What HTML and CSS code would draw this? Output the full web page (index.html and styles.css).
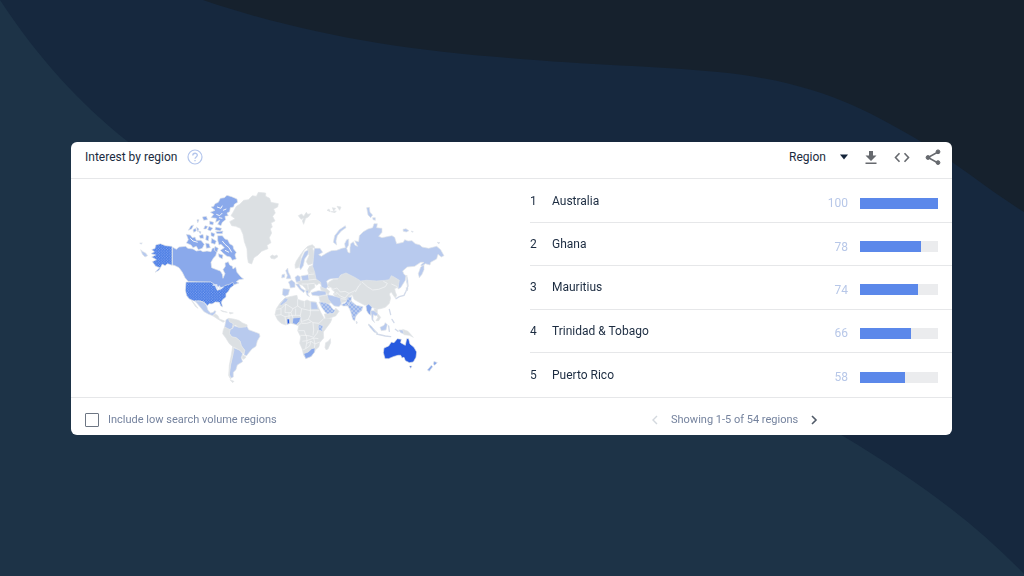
FILE: index.html
```html
<!DOCTYPE html>
<html lang="en">
<head>
<meta charset="utf-8">
<meta name="viewport" content="width=device-width, initial-scale=1">
<title>Interest by region</title>
<link rel="stylesheet" href="styles.css">
</head>
<body>
<svg class="backdrop" viewBox="0 0 1024 576" preserveAspectRatio="none" aria-hidden="true">
  <path class="backdrop-dark" d="M203 0C300 33 400 50 509 58C590 65 655 66 718 72C820 82 870 112 920 141C958 164 990 191 1024 212V0Z"/>
  <path class="backdrop-teal" d="M0 0C36 55 79 103 127 141C350 300 620 300 843 436C915 479 974 522 1024 574V576H0Z"/>
</svg>
<main class="page">
  <section class="card" aria-labelledby="card-title">
    <header class="card-header">
      <h1 class="title" id="card-title">Interest by region</h1>
      <button class="icon-button help" type="button" aria-label="Help">
        <svg width="16" height="16" viewBox="0 0 16 16" fill="none" stroke="currentColor"><circle cx="8" cy="8" r="7" stroke-width="1.2"/><path d="M5.8 6.4C5.8 3.5 10.3 3.6 10.3 6.2C10.3 7.9 8 7.9 8 9.8M8 11V12.3" stroke-width="1.3"/></svg>
      </button>
      <div class="actions">
        <label class="region-picker">
          <select class="region-select" aria-label="Resolution"><option>Region</option></select>
          <svg class="caret" width="8" height="6" viewBox="0 0 8 6"><path d="M0 .5H8L4 5.5Z" fill="currentColor"/></svg>
        </label>
        <button class="icon-button" type="button" aria-label="Download">
          <svg width="16" height="16" viewBox="0 0 16 16" fill="currentColor"><path d="M6 2H10V6.5H13.5L8 12L2.5 6.5H6ZM2.5 13.5H13.5V15.1H2.5Z"/></svg>
        </button>
        <button class="icon-button" type="button" aria-label="Embed">
          <svg width="16" height="16" viewBox="0 0 16 16" fill="none" stroke="currentColor" stroke-width="1.6"><path d="M5.5 4.2L1.5 8.5L5.5 12.8M10.5 4.2L14.5 8.5L10.5 12.8"/></svg>
        </button>
        <button class="icon-button" type="button" aria-label="Share">
          <svg width="16" height="16" viewBox="0 0 16 16" fill="currentColor" stroke="currentColor"><path d="M13 3L3 8.5L13 14" fill="none" stroke-width="1.5"/><circle cx="13" cy="2.8" r="1.9"/><circle cx="3" cy="8.5" r="1.9"/><circle cx="13" cy="13.6" r="1.9"/></svg>
        </button>
      </div>
    </header>
    <div class="card-body">
      <svg class="map" viewBox="71 179 459 218" role="img" aria-label="World map of interest by region">
        <defs>
          <pattern id="dots-strong" width="8" height="8" patternUnits="userSpaceOnUse"><rect width="8" height="8" fill="#4478e4"/><circle cx="2" cy="2" r="1.7" fill="#94b2f2"/><circle cx="6" cy="6" r="1.7" fill="#94b2f2"/></pattern>
          <pattern id="dots-soft" width="12" height="12" patternUnits="userSpaceOnUse"><rect width="12" height="12" fill="#b8caee"/><circle cx="3" cy="3" r="2.2" fill="#6f98ea"/><circle cx="9" cy="9" r="2.2" fill="#6f98ea"/></pattern>
        </defs>

        <!-- Asia, Africa and Oceania without data -->
        <g class="land none" transform="translate(265 270) scale(.3333)">
          <path d="M186 48L192 36L206 28L218 28L232 10L250 2L262 8L280 16L296 20L296 76L262 74L252 80L244 94L228 100L226 84L212 80L204 72L210 66L202 60L198 52L190 54Z"/>
          <path d="M128 0L134 -10L150 -14L154 10L168 24L176 34L170 44L162 40L156 46L148 40L150 52L138 60L132 70L124 64L122 56L112 46L102 42L96 38L106 32L130 30L132 16Z"/>
          <path d="M166 50L182 54L194 64L190 74L182 68L168 60Z"/>
          <path d="M162 80L182 76L190 78L198 98L190 102L180 98L166 96Z"/>
          <path d="M178 132L206 130L212 114L222 124L212 138L190 146L182 148Z"/>
          <path d="M60 84L74 80L96 76L98 88L110 92L118 94L126 90L138 95L152 96L160 112L168 128L178 146L201 146L196 158L184 174L175 186L176 204L164 218L162 230L151 240L140 258L124 265L116 256L112 238L104 220L107 200L98 182L101 168L88 162L76 160L62 165L48 160L38 150L30 134L34 116L46 98Z"/>
          <path d="M182 218L190 214L196 206L197 218L189 237L183 239L180 232Z"/>
        </g>
        <g class="borders" transform="translate(265 270) scale(.3333)">
          <path d="M34 118L48 116L62 102L84 116L98 108L98 88M48 116L48 134L32 136M62 102L60 128L78 128L84 116M48 134L60 140L64 164M60 140L84 136L106 136L110 116L98 108M110 116L136 122L136 94M78 128L84 144M106 136L110 158L100 168M136 118V134L130 148L112 154M136 122L162 122M130 148L144 158L162 160L176 146M110 160H126L138 156M100 182L118 182L122 196L134 198L146 202L156 190L160 180M144 158L146 180L144 196M106 196L124 196L126 212L112 214M126 212L122 236L114 240M126 212L146 204L160 206M126 220L138 214L150 222L148 234M146 204L150 222L164 216M138 214L134 228L122 236M72 128V148M92 116V136M118 94V112"/>
          <path d="M188 48L204 58L216 54L226 66L240 64L252 70L270 62L290 54M214 66L226 78L240 84L252 70M228 86L244 88M204 72L216 72M130 14L148 12M132 30L150 28L166 26M110 42L128 42L130 58M128 42L148 40"/>
        </g>
        <g class="land none" transform="translate(350 270) scale(.3333)">
          <path d="M6 72L18 60L26 48L34 30L60 24L96 22L112 10L124 4L150 30L146 50L134 56L136 66L140 76L136 84L130 76L124 66L118 72L122 84L118 100L106 112L92 116L80 118L66 112L58 104L44 106L26 96L12 88Z"/>
          <path d="M72 116L82 118L82 130L92 142L86 152L78 152L84 142L74 126Z"/>
          <path d="M158 178L174 184L190 202L178 196L162 194Z"/>
        </g>
        <path class="borders" transform="translate(350 270) scale(.3333)" d="M36 36L52 50L68 60L86 58L106 50L112 40L100 34M124 42L142 50M34 40L26 48L16 66"/>
        <g class="islands" transform="translate(350 270) scale(.3333)">
          <path d="M138 86L148 80L162 76L168 64L174 48L172 34M118 118L122 134M126 148L132 158M80 192L106 198L122 200M116 168L118 184M136 178L144 184M56 164L70 178L82 190"/>
        </g>

        <!-- Greenland and northern islands -->
        <g class="land none" transform="translate(225 185) scale(.3333)">
          <path d="M14 110L30 101L18 92L24 82L34 64L44 58L56 46L70 44L82 32L94 34L100 22L122 24L122 34L134 40L138 52L160 56L158 66L146 72L151 84L143 94L150 108L138 114L142 126L136 132L140 144L133 158L138 173L126 181L129 191L110 199L98 211L87 218L80 237L70 233L67 215L66 192L58 170L54 148L46 130L32 124L20 122Z"/>
          <path d="M136 214L142 210L148 213L156 210L158 216L148 222L138 220Z"/>
          <path d="M220 92L230 87L236 94L244 82L248 88L257 86L250 96L242 100L236 118L232 108L236 100L228 103Z"/>
          <path d="M306 76L312 72L316 80ZM322 68L332 70L326 78ZM336 64L348 66L344 76ZM318 80L334 78L330 83Z"/>
          <path d="M210 239L214 228L226 210L236 196L248 184L262 179L270 187L258 192L244 190L236 198L228 216L226 236L220 248L211 250Z"/>
          <path d="M248 192L260 186L266 198L268 222L262 236L250 240L244 230L252 212Z"/>
          <path d="M254 244L268 240L270 262L258 264L250 254Z"/>
        </g>

        <!-- Russia -->
        <g class="land low" transform="translate(330 185) scale(.3333)">
          <path d="M-47 190L-30 190L-22 202L-34 209L-26 214L-10 204L4 197L20 196L36 190L46 188L44 176L50 164L56 162L56 180L50 190L54 202L60 204L60 188L62 176L70 170L75 181L83 184L74 167L86 170L88 152L100 140L114 132L128 128L132 116L142 116L140 128L156 130L156 142L146 154L156 158L176 154L186 152L194 157L200 176L220 172L224 164L234 168L246 167L256 176L270 180L276 186L296 190L320 184L332 194L342 212L334 216L324 208L320 222L302 232L300 240L286 236L276 244L272 240L282 232L272 232L254 244L232 246L218 258L222 268L228 272L226 286L212 308L204 312L206 296L208 286L192 276L184 272L178 284L166 286L140 288L110 286L92 288L76 278L60 270L48 264L32 270L26 280L0 282L-10 288L-6 304L-12 312L-26 306L-28 292L-42 282L-46 262L-52 244L-50 222Z"/>
          <path d="M272 246L282 240L282 254L276 268L268 278L265 266Z"/>
          <path d="M10 172L14 152L28 134L46 122L48 128L34 138L22 152L18 168L20 180Z"/>
          <path d="M110 68L118 67L120 82L128 90L122 98L114 90ZM128 98L136 98L136 106L129 104Z"/>
          <path d="M219 133L228 131L237 137L229 141L220 139ZM244 138L250 140L246 142ZM322 172L330 173L325 176Z"/>
          <path d="M230 270L234 288L232 304L230 290ZM228 308L234 310L232 318Z"/>
        </g>

        <!-- Europe, Middle East and South Asia -->
        <g class="land low" transform="translate(265 270) scale(.3333)">
          <path d="M62 2L68 -6L70 6L76 18L78 26L64 26L67 16Z"/><path d="M51 14L59 12L59 22L50 24Z"/>
          <path d="M70 36L80 30L90 38L90 52L76 54L74 44Z"/><path d="M54 56L74 58L70 74L60 79L52 74Z"/>
          <path d="M90 22L98 16L106 20L106 34L94 37Z"/><path d="M108 18L130 14L132 30L112 32Z"/>
          <path d="M92 42L102 42L108 54L120 62L116 68L104 58Z"/><path d="M138 68L160 62L182 64L184 74L162 78L142 76Z"/>
          <path d="M186 74L198 76L214 80L226 84L229 102L222 110L208 108L198 98L190 88Z"/>
          <path d="M60 84L70 86L66 94L50 106L44 104Z"/><path d="M137 95L154 97L160 118H138Z"/>
          <path d="M109 -33L119 -55L131 -61L129 -47L119 -33L115 -13L107 -1L103 -9Z"/>
          <path d="M122 62L132 60L128 72L134 80L126 76Z"/>
        </g>
        <g class="land" transform="translate(265 270) scale(.3333)" fill="url(#dots-soft)">
          <path d="M162 96L178 97L194 104L204 118L211 120L206 130L186 132L180 126L170 112Z"/>
          <path d="M228 104L242 98L248 82L260 80L258 94L248 108L234 108Z"/>
          <path d="M248 108L258 92L264 98L274 106L294 110L290 122L280 130L272 140L269 153L263 148L258 128L254 118Z"/>
          <path d="M160 164L174 166L172 184L160 180Z"/>
        </g>
        <g class="land mid" transform="translate(265 270) scale(.3333)">
          <path d="M84 144L107 142L104 154L94 164L82 160Z"/>
          <path d="M116 251L130 246L140 236L150 234L149 246L138 260L122 266Z"/>
        </g>
        <g class="land high" transform="translate(265 270) scale(.3333)"><path d="M66 147L73 147L74 160L67 163Z"/></g>
        <g class="land low" transform="translate(350 270) scale(.3333)">
          <path d="M62 122L72 122L84 132L78 138L70 134L69 148L74 158L66 150Z"/>
          <path d="M55 162L64 168L80 190L72 186L60 172Z"/>
          <path d="M90 172L102 166L106 158L112 164L108 180L94 182Z"/>
          <path d="M146 180L158 180L162 192L152 188Z"/><path d="M18 154L22 156L20 162Z"/>
        </g>
        <g class="land mid" transform="translate(350 270) scale(.3333)">
          <path d="M48 108L56 102L66 112L62 124L62 136L56 132L50 122Z"/>
          <path d="M252 274L262 278L254 286L250 282Z"/><path d="M244 286L248 290L238 304L232 300Z"/>
        </g>

        <!-- North America -->
        <g class="land mid" transform="translate(135 185) scale(.3333)">
          <path d="M112 186L124 193L132 186L152 184L158 190L174 192L184 198L196 196L204 200L216 198L228 200L232 190L240 188L246 200L242 212L235 220L228 232L230 248L242 253L256 258L262 268L264 280L270 266L264 254L271 244L270 234L280 230L284 240L292 244L294 252L302 246L306 262L318 276L326 282L312 284L304 290L312 294L296 300L286 302L270 310L262 308L244 304L228 292L160 290L150 278L142 262L132 248L120 242L112 240Z"/>
          <path d="M240 56L250 52L256 40L268 38L276 31L290 35L306 42L308 52L298 58L296 66L286 68L284 80L276 84L280 92L270 94L272 104L262 112L258 122L248 118L254 106L242 112L244 100L228 98L236 88L226 82L240 76L228 66L236 64Z"/>
          <path d="M248 152L262 152L270 162L278 164L284 176L294 182L296 192L304 202L300 210L304 222L292 226L286 216L276 214L264 204L256 196L268 188L258 178L252 180L248 166Z"/>
          <path d="M154 148L166 150L172 158L180 156L184 166L198 166L208 178L202 190L190 194L184 184L174 188L168 180L154 174L160 164Z"/>
          <path d="M160 136L168 122L176 120L170 132ZM174 134L182 130L184 138L176 142ZM184 126L192 132L188 140ZM190 138L198 140L196 146ZM186 104L192 104L188 114ZM202 96L214 94L218 104L206 106ZM210 122L218 124L214 132L206 132ZM222 124L234 130L226 138L218 134ZM192 152L204 148L206 160L196 160ZM214 150L222 154L220 168L212 164ZM228 142L240 146L236 156L228 152ZM230 160L244 168L240 178L228 174ZM224 108L236 112L234 120L224 118ZM242 126L260 130L256 138L240 134ZM242 140L264 138L262 146L246 146ZM212 174L222 176L226 188L214 190ZM240 184L250 190L246 202L238 196ZM250 206L264 210L262 222L252 216Z"/>
        </g>
        <path class="inlets" transform="translate(135 185) scale(.3333)" d="M246 66L258 70L262 62M244 88L254 92L262 84M264 76L274 72M252 98L262 100M166 160L174 168L188 172M262 168L270 178L282 188L290 202M270 196L282 202"/>
        <g class="land" transform="translate(135 185) scale(.3333)" fill="url(#dots-strong)">
          <path d="M50 194L60 190L62 180L76 176L92 182L111 184V241L98 236L90 242L82 238L72 256L60 262L74 248L62 244L52 230L64 224L50 216L62 210L48 206L58 200Z"/>
        </g>
        <g class="land low" transform="translate(135 185) scale(.3333)"><path d="M17 194L24 200L32 204L38 212L30 216L22 208ZM14 174L22 174L18 178Z"/></g>
        <g class="land" transform="translate(180 285) scale(.3333)" fill="url(#dots-strong)">
          <path d="M18 -9L92 -9L104 -2L108 8L112 16L124 12L134 2L148 -2L158 -8L162 0L150 10L146 18L138 26L138 36L128 44L124 52L128 66L122 62L118 52L106 51L96 57L88 56L82 62L72 52L60 48L42 48L28 42L20 32L16 16Z"/>
        </g>
        <path class="lakes" transform="translate(180 285) scale(.3333)" d="M98 0L110 0L112 12M118 2L120 10L130 6"/>
        <g class="land low" transform="translate(180 285) scale(.3333)">
          <path d="M44 48L60 48L72 52L80 62L84 76L92 84L100 82L104 77L108 79L104 87L98 92L86 88L72 80L62 68L52 56Z"/>
          <path d="M138 104L146 100L148 108L160 116L158 128L150 134L142 132L134 126L136 114Z"/>
          <path d="M150 134L158 130L162 122L174 126L186 126L200 122L206 134L222 140L238 146L240 154L232 168L228 184L216 192L206 204L200 212L192 210L194 196L184 182L180 168L168 158L156 156L148 146Z"/>
          <path d="M160 188L180 196L188 206L184 218L188 230L172 240L168 254L160 262L160 276L152 280L148 268L152 240L158 212Z"/>
        </g>
        <g class="land none" transform="translate(180 285) scale(.3333)">
          <path d="M34 46L42 54L54 70L46 64Z"/>
          <path d="M98 92L106 87L114 92L118 102L134 108L130 112L116 104Z"/>
          <path d="M122 76L142 82L128 80ZM148 82L160 84L150 87Z"/>
          <path d="M146 100L160 102L176 106L188 114L202 120L198 126L176 127L166 120L158 126L160 116L148 110Z"/>
          <path d="M134 126L150 134L148 146L156 156L168 158L180 168L184 182L194 196L190 206L180 196L166 188L160 186L148 176L138 160L128 146L130 134Z"/>
          <path d="M158 184L162 196L156 220L150 244L148 268L152 282L146 272L148 240L154 210Z"/>
          <path d="M188 210L198 216L192 223L186 220Z"/><path d="M150 284L162 289L158 293Z"/>
        </g>

        <!-- Australia -->
        <g class="land high" transform="translate(350 270) scale(.3333)">
          <path d="M102 234L116 228L124 216L132 218L142 206L154 208L152 218L166 226L170 206L176 206L180 222L192 232L200 246L198 262L190 276L178 278L166 272L162 262L156 264L152 256L144 256L130 260L116 266L105 266L100 248Z"/>
          <path d="M178 288L186 288L182 295Z"/>
        </g>
      </svg>
      <ol class="regions">
        <li class="region"><span class="rank">1</span><span class="name">Australia</span><span class="score">100</span><span class="bar"><span class="bar-fill" style="width:100%"></span></span></li>
        <li class="region"><span class="rank">2</span><span class="name">Ghana</span><span class="score">78</span><span class="bar"><span class="bar-fill" style="width:78%"></span></span></li>
        <li class="region"><span class="rank">3</span><span class="name">Mauritius</span><span class="score">74</span><span class="bar"><span class="bar-fill" style="width:74%"></span></span></li>
        <li class="region"><span class="rank">4</span><span class="name">Trinidad &amp; Tobago</span><span class="score">66</span><span class="bar"><span class="bar-fill" style="width:66%"></span></span></li>
        <li class="region"><span class="rank">5</span><span class="name">Puerto Rico</span><span class="score">58</span><span class="bar"><span class="bar-fill" style="width:58%"></span></span></li>
      </ol>
    </div>
    <footer class="card-footer">
      <div class="low-volume">
        <input class="checkbox" type="checkbox" id="low-volume">
        <label for="low-volume">Include low search volume regions</label>
      </div>
      <nav class="pager" aria-label="Region pages">
        <button class="icon-button page-button" type="button" aria-label="Previous" disabled><svg width="8" height="10" viewBox="0 0 8 10" fill="none" stroke="currentColor" stroke-width="1.4"><path d="M6 1L2 5L6 9"/></svg></button>
        <span>Showing 1-5 of 54 regions</span>
        <button class="icon-button page-button" type="button" aria-label="Next"><svg width="8" height="10" viewBox="0 0 8 10" fill="none" stroke="currentColor" stroke-width="1.6"><path d="M2 1L6 5L2 9"/></svg></button>
      </nav>
    </footer>
  </section>
</main>
</body>
</html>
```
FILE: styles.css
```css
* { box-sizing: border-box; }
body {
  margin: 0;
  background: #16283e;
  color: #1b2b40;
  font-family: Roboto, "Liberation Sans", sans-serif;
  font-size: 12px;
  line-height: 16px;
}
.backdrop { position: fixed; inset: 0; width: 100%; height: 100%; z-index: -1; }
.backdrop-dark { fill: #16212d; }
.backdrop-teal { fill: #1d3347; }
.page {
  min-height: 100vh;
  display: flex;
  align-items: center;
  padding: 16px 72px 16px 71px;
}
.card { flex: 1; min-width: 0; background: #fff; border-radius: 6px; }
.card-header {
  display: flex;
  align-items: center;
  gap: 10px;
  padding: 6px 11px 12px 14px;
  border-bottom: 1px solid #e6e7e9;
}
.title { margin: 0; font-size: 12px; font-weight: 400; line-height: 18px; }
.icon-button {
  display: flex;
  padding: 0;
  border: 0;
  background: none;
  color: #66696e;
}
.help { color: #b4c6ec; }
.actions { display: flex; align-items: center; gap: 15px; margin-left: auto; }
.region-picker { display: flex; align-items: center; }
.region-select {
  appearance: none;
  width: 51px;
  padding: 0;
  border: 0;
  background: none;
  color: inherit;
  font: inherit;
}
.caret { color: #14243a; }
.card-body { display: grid; grid-template-columns: 459fr 422fr; }
.map { display: block; width: 100%; height: auto; align-self: center; }
.land { stroke: #e2e5e8; stroke-width: 2; stroke-linejoin: round; }
.none { fill: #dce0e3; }
.low { fill: #b8caee; }
.mid { fill: #8aa9eb; }
.high { fill: #2659df; }
.borders { fill: none; stroke: #f5f6f7; stroke-width: 2; }
.inlets { fill: none; stroke: #f1f4fa; stroke-width: 3; }
.lakes { fill: none; stroke: #dfe7f8; stroke-width: 4; }
.islands { fill: none; stroke: #d3dbea; stroke-width: 4; stroke-linecap: round; }
.regions {
  display: grid;
  grid-auto-rows: 1fr;
  margin: 0;
  padding: 1px 0 0;
  list-style: none;
}
.region {
  display: grid;
  grid-template-columns: 22px 1fr auto 78px;
  align-items: center;
  padding-right: 14px;
  border-bottom: 1px solid #e6e7e9;
}
.region:last-child { border-bottom: 0; }
.score { margin: 5px 12px 0 0; color: #b7c7e8; }
.bar { height: 11px; margin-top: 5px; background: #ebecee; }
.bar-fill { display: block; height: 100%; background: #5b88ea; }
.card-footer {
  display: grid;
  grid-template-columns: 580fr 301fr;
  align-items: center;
  padding: 14px 0 7px;
  border-top: 1px solid #e6e7e9;
  color: #75839e;
  font-size: 11px;
}
.low-volume { display: flex; align-items: center; gap: 9px; padding-left: 14px; }
.checkbox {
  appearance: none;
  width: 14px;
  height: 14px;
  margin: 0;
  border: 1px solid #6d7683;
  border-radius: 1px;
  background: #fff;
}
.checkbox:checked { background: #5b88ea; }
.pager { display: flex; align-items: center; gap: 12px; }
.page-button { color: #505a68; }
.page-button:disabled { color: #d3d8de; }
```
